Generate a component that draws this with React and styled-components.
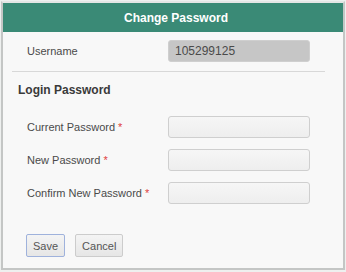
import React from 'react'
import styled, { createGlobalStyle } from 'styled-components';

const GlobalStyle = createGlobalStyle`
  html, body {
    margin: 0;
    padding: 0;
    background: #eef0ef;
    font-family: "Liberation Sans", Arial, sans-serif;
  }
`;

const Page = styled.div`
  width: 346px;
  height: 272px;
  padding: 1px 1px 2px 1px;
  box-sizing: border-box;
`;

const Dialog = styled.div`
  height: 100%;
  box-sizing: border-box;
  border: 2px solid #c4c6c5;
  border-top-color: #e4e6e5;
  background: #f8f8f8;
  display: flex;
  flex-direction: column;
`;

const Header = styled.div`
  height: 29px;
  padding-left: 6px;
  background: #3a8a76;
  color: #fff;
  font-weight: bold;
  font-size: 12px;
  display: flex;
  align-items: center;
  justify-content: center;
`;

const Body = styled.div`
  padding: 8px 0 0 0;
  display: flex;
  flex-direction: column;
`;

const Row = styled.div`
  display: flex;
  align-items: center;
  height: 22px;
  padding-left: 24px;
  margin-bottom: ${p => p.$gap ?? 11}px;
`;

const Label = styled.label`
  width: 141px;
  font-size: 11px;
  color: #4a4a4a;
`;

const Star = styled.span`
  color: #e04040;
`;

const Input = styled.div`
  width: 142px;
  height: 22px;
  box-sizing: border-box;
  border: 1px solid #cfcfcf;
  border-radius: 3px;
  background: ${p => p.$disabled ? '#c6c6c6' : 'linear-gradient(#f6f6f6, #eeeeee)'};
  font-size: 12px;
  color: #4a4a4a;
  display: flex;
  align-items: center;
  padding-left: 6px;
`;

const Divider = styled.hr`
  margin: 0 18px 0 9px;
  border: none;
  border-top: 1px solid #d8d8d8;
`;

const Section = styled.div`
  font-weight: bold;
  font-size: 12px;
  color: #3a3a3a;
  padding: 11px 0 0 15px;
  height: 20px;
  margin-bottom: 13px;
`;

const Buttons = styled.div`
  display: flex;
  gap: 10px;
  padding: 30px 0 0 23px;
`;

const Button = styled.button`
  height: 23px;
  padding: 0 6px;
  font-family: "Liberation Sans", Arial, sans-serif;
  font-size: 11px;
  color: #555;
  background: linear-gradient(#f4f4f4, #e6e6e6);
  border: 1px solid ${p => p.$focus ? '#9fb2dc' : '#cccccc'};
  border-radius: 2px;
`;

const App = () => {
  return (
    <Page>
      <GlobalStyle />
      <Dialog>
        <Header>Change Password</Header>
        <Body>
          <Row $gap={9}>
            <Label>Username</Label>
            <Input $disabled>105299125</Input>
          </Row>
          <Divider />
          <Section>Login Password</Section>
          <Row>
            <Label>Current Password <Star>*</Star></Label>
            <Input />
          </Row>
          <Row>
            <Label>New Password <Star>*</Star></Label>
            <Input />
          </Row>
          <Row $gap={0}>
            <Label>Confirm New Password <Star>*</Star></Label>
            <Input />
          </Row>
          <Buttons>
            <Button $focus>Save</Button>
            <Button>Cancel</Button>
          </Buttons>
        </Body>
      </Dialog>
    </Page>
  )
}

export default App
